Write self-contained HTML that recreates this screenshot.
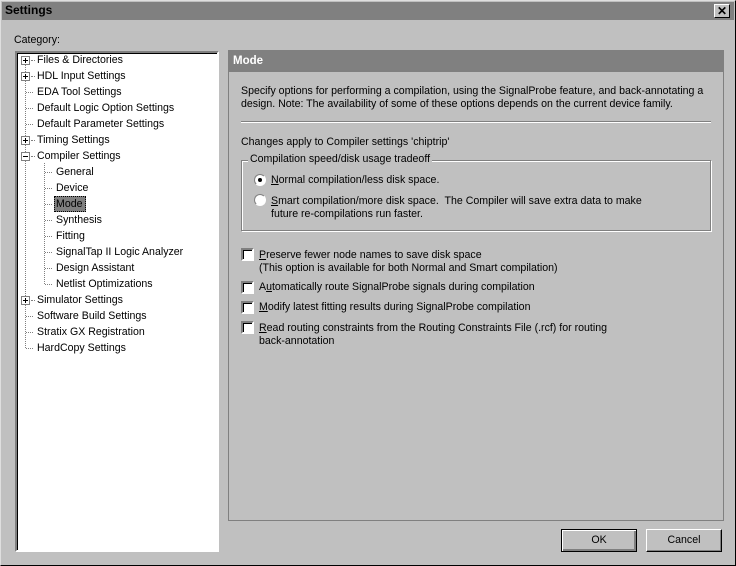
<!DOCTYPE html>
<html><head><style>
*{margin:0;padding:0;box-sizing:border-box}
body{width:736px;height:566px;background:#c0c0c0;font-family:"Liberation Sans",sans-serif;font-size:10.6px;color:#000;position:relative;overflow:hidden}
.a{position:absolute;white-space:nowrap;line-height:15px}
.win{position:absolute;left:0;top:0;width:736px;height:566px;border:1px solid;border-color:#dfdfdf #000 #000 #dfdfdf}
.title{position:absolute;left:2px;top:2px;width:732px;height:18px;background:#808080}
.tree{position:absolute;left:15px;top:51px;width:204px;height:501px;background:#fff;border:2px solid;border-color:#808080 #fff #fff #808080;box-shadow:inset 1px 1px 0 #000}
.box{position:absolute;width:9px;height:9px;border:1px solid #808080;background:#fff}
.box:before{content:"";position:absolute;left:1px;top:3px;width:5px;height:1px;background:#000}
.box.p:after{content:"";position:absolute;left:3px;top:1px;width:1px;height:5px;background:#000}
.dl{position:absolute;border-top:1px dotted #808080;width:7px;height:0}
.vl{position:absolute;border-left:1px dotted #808080;width:0}
.cb{position:absolute;width:13px;height:13px;background:#fff;border:2px solid;border-color:#808080 #fff #fff #808080;box-shadow:inset 1px 1px 0 #000}
.rb{position:absolute;width:12px;height:12px;border-radius:50%;background:#fff;border:1px solid;border-color:#808080 #fff #fff #808080}
.btn{position:absolute;height:23px;width:76px;background:#c0c0c0;border:1px solid;border-color:#fff #000 #000 #fff;box-shadow:inset -1px -1px 0 #808080;text-align:center;line-height:21px}
</style></head><body>
<div class="win"></div>
<div class="title"></div>
<div class="a" style="left:5px;top:3px;font-weight:bold;font-size:12px">Settings</div>
<div class="a" style="left:714px;top:4px;width:16px;height:14px;background:#c0c0c0;border:1px solid;border-color:#fff #000 #000 #fff;text-align:center;font-weight:bold;font-size:12px;line-height:12px">✕</div>
<div class="a" style="left:14px;top:33px">Category:</div>
<div class="tree"></div>
<div class="vl" style="left:25px;top:64px;height:284px"></div>
<div class="vl" style="left:44px;top:163px;height:121px"></div>
<div class="box p" style="left:21px;top:56px"></div><div class="dl" style="left:31px;top:60px;width:4px"></div><div class="a" style="left:37px;top:53px">Files &amp; Directories</div>
<div class="box p" style="left:21px;top:72px"></div><div class="dl" style="left:31px;top:76px;width:4px"></div><div class="a" style="left:37px;top:69px">HDL Input Settings</div>
<div class="dl" style="left:26px;top:92px"></div><div class="a" style="left:37px;top:85px">EDA Tool Settings</div>
<div class="dl" style="left:26px;top:108px"></div><div class="a" style="left:37px;top:101px">Default Logic Option Settings</div>
<div class="dl" style="left:26px;top:124px"></div><div class="a" style="left:37px;top:117px">Default Parameter Settings</div>
<div class="box p" style="left:21px;top:136px"></div><div class="dl" style="left:31px;top:140px;width:4px"></div><div class="a" style="left:37px;top:133px">Timing Settings</div>
<div class="box" style="left:21px;top:152px"></div><div class="dl" style="left:31px;top:156px;width:4px"></div><div class="a" style="left:37px;top:149px">Compiler Settings</div>
<div class="dl" style="left:45px;top:172px"></div><div class="a" style="left:56px;top:165px">General</div>
<div class="dl" style="left:45px;top:188px"></div><div class="a" style="left:56px;top:181px">Device</div>
<div class="dl" style="left:45px;top:204px"></div><div class="a" style="left:54px;top:196px;width:32px;height:16px;background:#808080;border:1px dotted #000"></div><div class="a" style="left:56px;top:197px">Mode</div>
<div class="dl" style="left:45px;top:220px"></div><div class="a" style="left:56px;top:213px">Synthesis</div>
<div class="dl" style="left:45px;top:236px"></div><div class="a" style="left:56px;top:229px">Fitting</div>
<div class="dl" style="left:45px;top:252px"></div><div class="a" style="left:56px;top:245px">SignalTap II Logic Analyzer</div>
<div class="dl" style="left:45px;top:268px"></div><div class="a" style="left:56px;top:261px">Design Assistant</div>
<div class="dl" style="left:45px;top:284px"></div><div class="a" style="left:56px;top:277px">Netlist Optimizations</div>
<div class="box p" style="left:21px;top:296px"></div><div class="dl" style="left:31px;top:300px;width:4px"></div><div class="a" style="left:37px;top:293px">Simulator Settings</div>
<div class="dl" style="left:26px;top:316px"></div><div class="a" style="left:37px;top:309px">Software Build Settings</div>
<div class="dl" style="left:26px;top:332px"></div><div class="a" style="left:37px;top:325px">Stratix GX Registration</div>
<div class="dl" style="left:26px;top:348px"></div><div class="a" style="left:37px;top:341px">HardCopy Settings</div>
<div class="a" style="left:228px;top:50px;width:496px;height:471px;border:1px solid #808080"></div>
<div class="a" style="left:229px;top:51px;width:494px;height:21px;background:#808080"></div>
<div class="a" style="left:233px;top:54px;color:#fff;font-weight:bold;font-size:11.5px">Mode</div>
<div class="a" style="left:241px;top:85px;line-height:13px">Specify options for performing a compilation, using the SignalProbe feature, and back-annotating a<br>design. Note: The availability of some of these options depends on the current device family.</div>
<div class="a" style="left:241px;top:121px;width:470px;height:2px;border-top:1px solid #808080;border-bottom:1px solid #fff"></div>
<div class="a" style="left:241px;top:135px">Changes apply to Compiler settings 'chiptrip'</div>
<div class="a" style="left:241px;top:160px;width:470px;height:71px;border:1px solid #808080;box-shadow:1px 1px 0 #fff,inset 1px 1px 0 #fff"></div>
<div class="a" style="left:248px;top:152px;background:#c0c0c0;padding:0 2px">Compilation speed/disk usage tradeoff</div>
<div class="rb" style="left:254px;top:174px"></div><div class="a" style="left:258px;top:178px;width:4px;height:4px;background:#000;border-radius:50%"></div>
<div class="a" style="left:271px;top:173px"><u>N</u>ormal compilation/less disk space.</div>
<div class="rb" style="left:254px;top:194px"></div>
<div class="a" style="left:271px;top:195px;line-height:13px"><u>S</u>mart compilation/more disk space.&nbsp; The Compiler will save extra data to make<br>future re-compilations run faster.</div>
<div class="cb" style="left:241px;top:248px"></div><div class="a" style="left:259px;top:249px;line-height:13px"><u>P</u>reserve fewer node names to save disk space<br>(This option is available for both Normal and Smart compilation)</div>
<div class="cb" style="left:241px;top:281px"></div><div class="a" style="left:259px;top:280px">A<u>u</u>tomatically route SignalProbe signals during compilation</div>
<div class="cb" style="left:241px;top:301px"></div><div class="a" style="left:259px;top:300px"><u>M</u>odify latest fitting results during SignalProbe compilation</div>
<div class="cb" style="left:241px;top:321px"></div><div class="a" style="left:259px;top:322px;line-height:13px"><u>R</u>ead routing constraints from the Routing Constraints File (.rcf) for routing<br>back-annotation</div>
<div class="btn" style="left:561px;top:529px;border:1px solid #000;box-shadow:inset 1px 1px 0 #fff,inset -2px -2px 0 #808080">OK</div>
<div class="btn" style="left:646px;top:529px">Cancel</div>
</body></html>
